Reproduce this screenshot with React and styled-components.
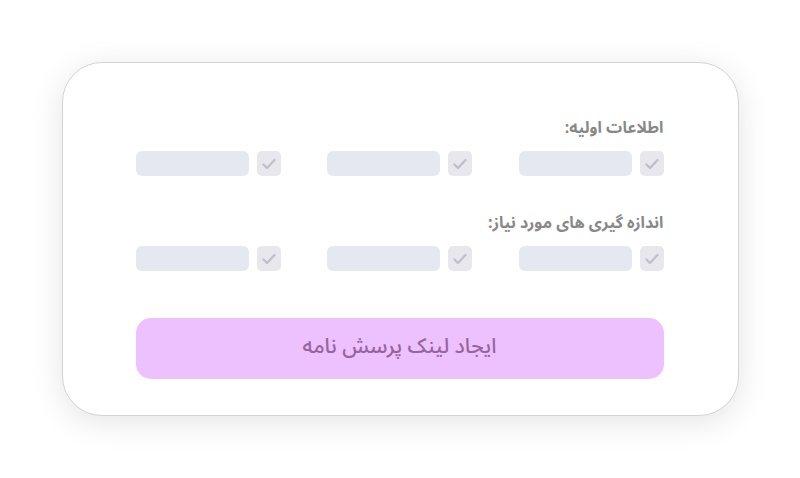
import React from "react";
import styled, { createGlobalStyle } from "styled-components";

const Global = createGlobalStyle`
  html, body { margin: 0; padding: 0; background: #ffffff; }
  body { font-family: "Noto Sans Arabic", "DejaVu Sans", "Noto Sans", sans-serif; }
`;

const Page = styled.div`
  width: 800px;
  height: 478px;
  display: flex;
  align-items: center;
  justify-content: center;
`;

const Card = styled.div`
  box-sizing: border-box;
  width: 677px;
  height: 354px;
  direction: rtl;
  background: #ffffff;
  border: 1px solid #d4d4d4;
  border-radius: 40px;
  box-shadow: 0 6px 32px rgba(0, 0, 0, 0.11);
  padding: 54px 74px 35px 73px;
  display: flex;
  flex-direction: column;
`;

const Section = styled.section`
  display: flex;
  flex-direction: column;
  gap: 12px;
  margin-bottom: ${(p) => p.$after}px;
`;

const Label = styled.div`
  font-size: 16px;
  font-weight: 700;
  line-height: 22px;
  height: 22px;
  color: #888888;
`;

const Row = styled.div`
  display: flex;
  justify-content: space-between;
`;

const Option = styled.div`
  display: flex;
  align-items: center;
  gap: 8px;
`;

const Check = styled.div`
  width: 24px;
  height: 25px;
  border-radius: 5px;
  background: #e7e7ed;
  display: flex;
  align-items: center;
  justify-content: center;
`;

const Bar = styled.div`
  width: 113px;
  height: 25px;
  border-radius: 6px;
  background: #e5e8f0;
`;

const Button = styled.button`
  height: 61px;
  margin-top: 1px;
  padding: 0 0 6px;
  border: none;
  border-radius: 15px;
  background: #ecc1fd;
  color: #96659f;
  font-family: inherit;
  font-size: 21px;
  font-weight: 500;
  direction: rtl;
  cursor: pointer;
`;

const Tick = () => (
  <svg width="14" height="12" viewBox="0 0 14 12" fill="none">
    <path d="M1.5 6.5 L5 10 L12.5 2" stroke="#bfbfc8" strokeWidth="2.2" strokeLinecap="round" strokeLinejoin="round" />
  </svg>
);

const OptionRow = () => (
  <Row>
    {[0, 1, 2].map((i) => (
      <Option key={i}>
        <Check><Tick /></Check>
        <Bar />
      </Option>
    ))}
  </Row>
);

export default function App() {
  return (
    <>
      <Global />
      <Page>
        <Card>
          <Section $after={36}>
            <Label>اطلاعات اولیه:</Label>
            <OptionRow />
          </Section>
          <Section $after={46}>
            <Label>اندازه گیری های مورد نیاز:</Label>
            <OptionRow />
          </Section>
          <Button>ایجاد لینک پرسش نامه</Button>
        </Card>
      </Page>
    </>
  );
}
